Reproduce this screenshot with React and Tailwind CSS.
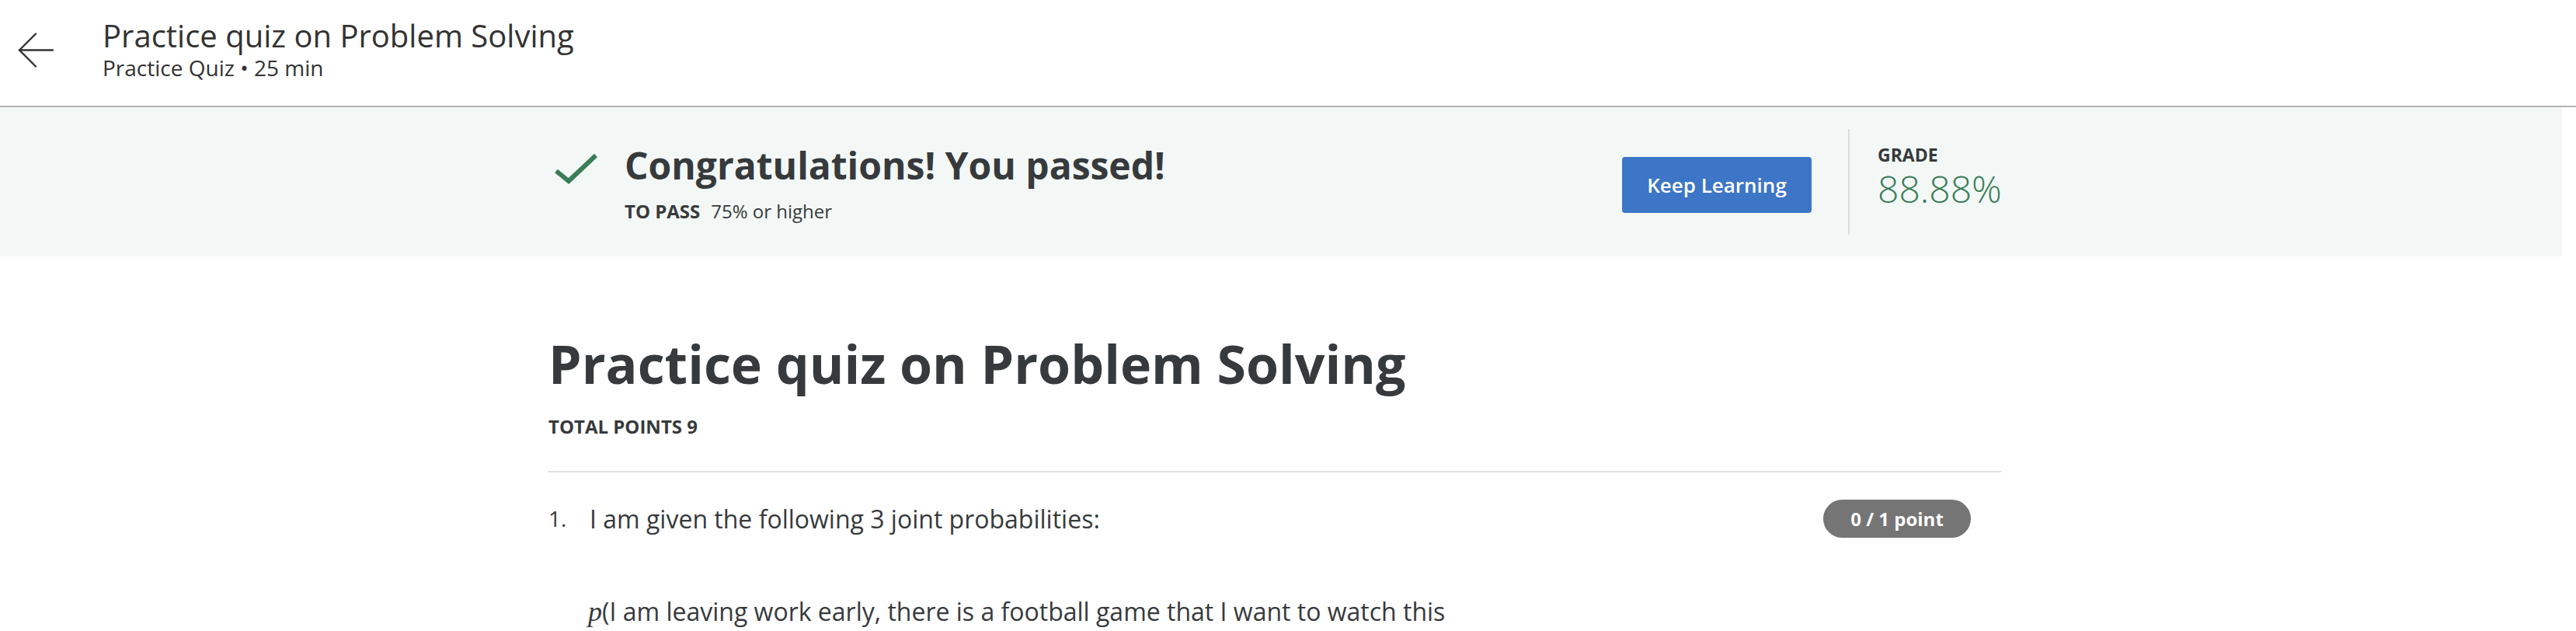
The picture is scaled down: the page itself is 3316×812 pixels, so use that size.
import React from "react";

const ArrowLeft = () => (
    <svg width="46" height="45" viewBox="0 0 46 45" fill="none" stroke="#333" strokeWidth="2.4" strokeLinecap="round" strokeLinejoin="round">
        <path d="M45 22.5H2" />
        <path d="M23 1.5L2 22.5L23 43.5" />
    </svg>
);

const Check = () => (
    <svg width="56" height="40" viewBox="0 0 56 40" fill="none" stroke="#3a7d57" strokeWidth="6">
        <path d="M2 23L18 36L53 3" />
    </svg>
);

const App = () => {
    return (
        <div className="w-[3316px] h-[812px] overflow-hidden bg-white text-[#373a3c] font-['Open_Sans',sans-serif]">
            {/* top header */}
            <div className="h-[138px] border-b-2 border-[#b3b3b3] flex">
                <div className="ml-[23px] mt-[42px]">
                    <ArrowLeft />
                </div>
                <div className="ml-[63px] pt-[26px]">
                    <h1 className="text-[40px] leading-[40px] text-[#333] whitespace-nowrap">Practice quiz on Problem Solving</h1>
                    <p className="mt-[7px] text-[28px] leading-[28px] text-[#333] whitespace-nowrap">Practice Quiz • 25 min</p>
                </div>
            </div>

            {/* result banner */}
            <div className="w-[3298px] h-[192px] bg-[#f3f8f6]">
                <div className="ml-[706px] w-[1870px] flex">
                    <div className="ml-[8px] mt-[59px]">
                        <Check />
                    </div>
                    <div className="ml-[34px] mt-[51px]">
                        <h2 className="text-[48px] leading-[48px] font-bold whitespace-nowrap">Congratulations! You passed!</h2>
                        <div className="mt-[23px] text-[24px] leading-[24px] whitespace-nowrap">
                            <span className="font-bold">TO PASS</span>
                            <span className="ml-[14px]">75% or higher</span>
                        </div>
                    </div>
                    <div className="flex-1" />
                    <button className="mt-[64px] w-[244px] h-[72px] rounded-[4px] bg-[#3d75c7] text-white text-[26px] font-semibold">
                        Keep Learning
                    </button>
                    <div className="ml-[47px] mt-[28px] w-[2px] h-[136px] bg-[#dcdedd]" />
                    <div className="ml-[36px] w-[159px] mt-[50px]">
                        <div className="text-[23px] leading-[23px] font-bold">GRADE</div>
                        <div className="mt-[8px] text-[48px] leading-[48px] text-[#3a7d57] font-light whitespace-nowrap">88.88%</div>
                    </div>
                </div>
            </div>

            {/* quiz body */}
            <div className="ml-[706px] w-[1870px]">
                <h1 className="mt-[104px] text-[68px] leading-[68px] font-bold whitespace-nowrap">Practice quiz on Problem Solving</h1>
                <div className="mt-[35px] text-[24px] leading-[24px] font-bold">TOTAL POINTS 9</div>
                <div className="mt-[45px] h-[2px] bg-[#e1e1e1]" />
                <div className="mt-[35px] flex items-center h-[49px]">
                    <span className="w-[53px] self-start mt-[8px] text-[28px] leading-[32px]">1.</span>
                    <p className="text-[32px] leading-[32px]">I am given the following 3 joint probabilities:</p>
                    <div className="flex-1" />
                    <span className="mr-[39px] w-[190px] h-[49px] rounded-full bg-[#757575] text-white text-[24px] font-bold flex items-center justify-center">
                        0 / 1 point
                    </span>
                </div>
                <p className="mt-[79px] ml-[51px] text-[32px] leading-[32px] whitespace-nowrap">
                    <span className="font-['Liberation_Serif',serif] italic text-[36px]">p</span>(I am leaving work early, there is a football game that I want to watch this
                </p>
            </div>
        </div>
    );
};

export default App;
